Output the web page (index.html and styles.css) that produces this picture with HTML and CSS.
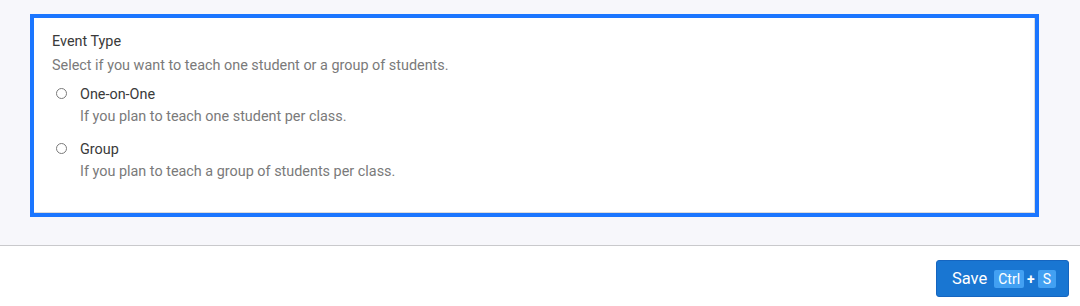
FILE: index.html
```html
<!DOCTYPE html>
<html>
<head>
<meta charset="utf-8">
<link rel="stylesheet" href="styles.css">
</head>
<body>
<div class="main">
  <div class="card">
    <div class="card-inner">
      <div class="title">Event Type</div>
      <div class="subtitle">Select if you want to teach one student or a group of students.</div>
      <div class="option first">
        <div class="opt-row"><span class="radio"></span><span class="opt-label">One-on-One</span></div>
        <div class="opt-desc">If you plan to teach one student per class.</div>
      </div>
      <div class="option second">
        <div class="opt-row"><span class="radio"></span><span class="opt-label">Group</span></div>
        <div class="opt-desc">If you plan to teach a group of students per class.</div>
      </div>
    </div>
  </div>
</div>
<div class="footer">
  <button class="save"><span class="save-label">Save</span><span class="kbd kbd-ctrl">Ctrl</span><span class="plus">+</span><span class="kbd kbd-s">S</span></button>
</div>
</body>
</html>
```
FILE: styles.css
```css
html, body { margin: 0; padding: 0; }
body { font-family: Roboto, "Liberation Sans", sans-serif; background: #fff; width: 1080px; height: 306px; overflow: hidden; }
.main { background: #f7f7fb; height: 246px; border-bottom: 1px solid #c9c9cc; padding: 14px 0 0 30px; box-sizing: border-box; }
.card { width: 1009px; height: 203px; border: 4px solid #1b76ff; box-sizing: border-box; background: #fff; }
.card-inner { height: 100%; box-sizing: border-box; border-right: 1px solid #dcdcdc; border-bottom: 1px solid #dcdcdc; padding: 14px 18px 0 18px; }
.title { font-size: 14.4px; line-height: 20px; color: #3a3a3a; }
.subtitle { font-size: 14.4px; line-height: 20px; color: #7a7a7a; margin-top: 4px; }
.option { padding-left: 4px; }
.option.first { margin-top: 8px; }
.option.second { margin-top: 12px; }
.opt-row { display: flex; align-items: center; height: 20px; }
.radio { width: 9px; height: 9px; border: 1px solid #7a7a7a; border-radius: 50%; margin-right: 13px; margin-top: -1px; background: #fff; }
.opt-label { font-size: 14.4px; color: #3a3a3a; }
.opt-desc { font-size: 14.4px; line-height: 20px; color: #7a7a7a; margin-top: 3px; padding-left: 24px; }
.footer { display: flex; justify-content: flex-end; padding: 14px 11px 0 0; }
.save { display: flex; align-items: center; height: 37px; padding: 0 12px 0 15px; background: #1976d2; color: #fff; border: 1px solid #1565c0; border-radius: 3px; font-family: Roboto, "Liberation Sans", sans-serif; font-size: 16.5px; }
.save-label { margin-right: 7px; }
.kbd { display: inline-block; background: #42a0f2; color: #fff; font-size: 14px; line-height: 18px; border-radius: 2px; }
.kbd-ctrl { padding: 0 4px; }
.kbd-s { padding: 0 5px; }
.plus { font-size: 14px; margin: 0 3px; font-weight: bold; }
```
